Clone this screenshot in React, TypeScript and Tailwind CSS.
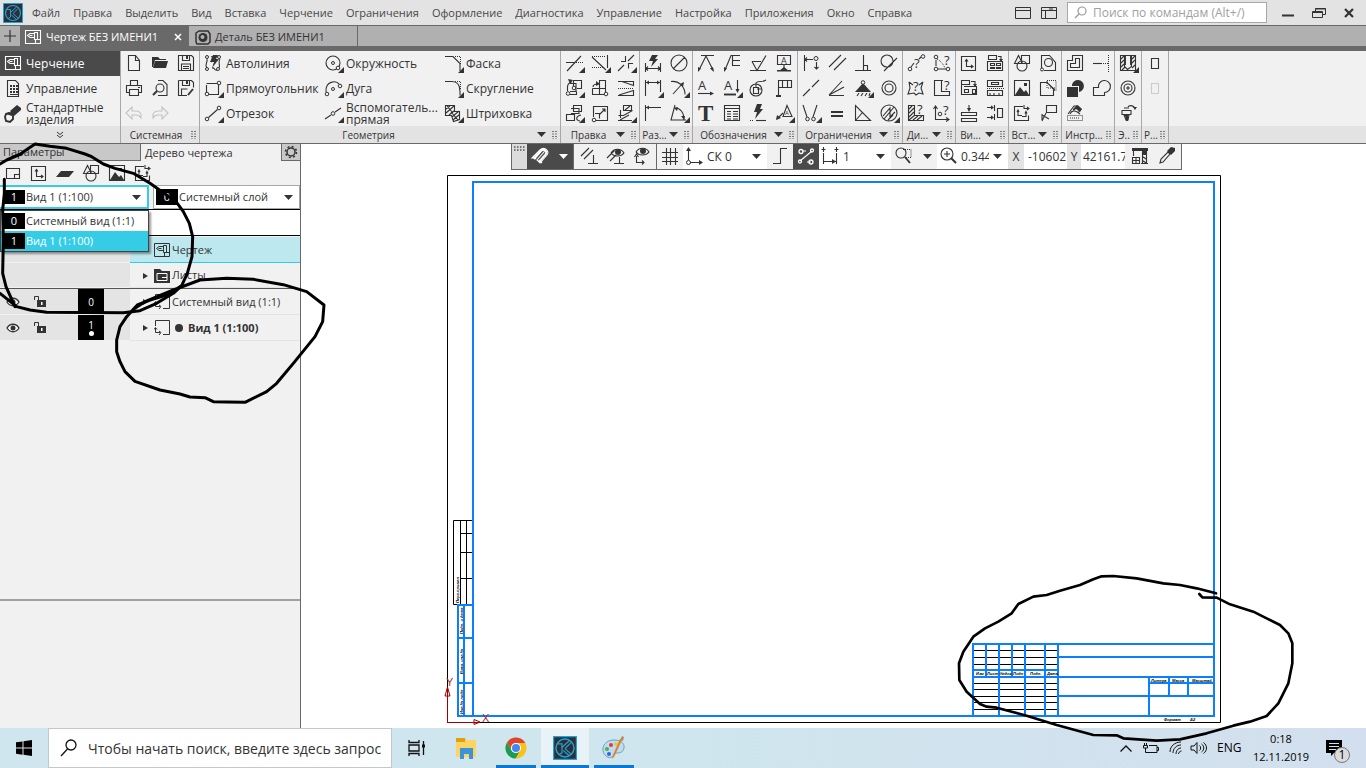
import { useState } from 'react';
import type { ReactNode } from 'react';

interface Glyph {
  s?: string; // stroked path
  f?: string; // filled path
  d?: string; // dotted path
  b?: string; // bold stroke
  corner?: boolean;
  extra?: ReactNode;
}

const letter = (ch: string, x: number, y: number, size: number) => (
  <text x={x} y={y} fontSize={size} fontFamily="Open Sans, sans-serif" fill="currentColor">{ch}</text>
);

const DRAFT = 'M5.5 5.500h15v13h-15zM15.500 18v-3.500h5M14.500 7.500h3v7h-3zM14 8.500h-4l-2.500 2 2.500 2h4M9.500 10.500h3';
const AXES_BOX = 'M5.5 5.500h14v14h-14zM10.500 9v6.500h6M9 10.500l1.500-2 1.500 2M15 14l2 1.500-2 1.500';
const SHAPES = 'M9.500 4.500l4 8h-8zM12.500 4.500h8v8h-8zM8 15a5 5 0 1 0 10 0a5 5 0 1 0-10 0';
const PICTURE = 'M5.500 4.500h15v15h-15z';
const PICTURE_FILL = 'M6 19l5-8 4 5 2-2 3 5zM15 7h3v3h-3z';
const BREAK_BOX = 'M14 5.500H5.500v14h14v-5M9 10v4.500h4M8 11l1-2 1 2M15 4v3.500h4M18 6l2 1.500-2 1.500M13 15.500h4v-4M16 12.500l1-2 1 2';

const glyphs: Record<string, Glyph> = {
  draft: { s: DRAFT },
  report: { s: 'M7.500 4.500h8l3 3v13h-11z', f: 'M10 9h2v2h-2zM13 9h2v2h-2zM16 9h2v2h-2zM10 12h2v2h-2zM13 12h2v2h-2zM16 12h2v2h-2zM10 15h2v2h-2zM13 15h2v2h-2zM16 15h2v2h-2zM10 18h8v1h-8z' },
  bolt3d: { b: 'M6 13l3-1 4 2v4l-3 3-4-1-1-4z', f: 'M10 10l7-6 4 3v2l-7 6zM6 13l3-2 5 1-2 3z' },
  file: { s: 'M7.500 4.500h7l4 5v10h-11zM14.500 4.500v5h4' },
  open: { f: 'M5 6h6l2 2h6v1H8l-2 7H5zM8 10h13l-2 7H6z' },
  save: { s: 'M5.500 4.500h13l2 2v13h-15zM9.500 4.500v5h7v-5M8.500 19v-6h9v6M10 15.500h6M10 17.500h6', f: 'M13 5h2v3h-2z' },
  print: { s: 'M9.500 9.500v-5h7v5M8 16.500H5.500v-7h15v7H18M8.500 13.500h9v6h-9zM17 11.500h2' },
  preview: { s: 'M11 4.500h5l4 4v11h-9M9 12a4 4 0 1 1 8 0a4 4 0 1 1-8 0', b: 'M10 15l-4 4' },
  saveas: { s: 'M5.500 4.500h13l2 2v5M14 19.500H5.500v-15M9.500 4.500v5h7v-5M8.500 19v-6h6', b: 'M15 19l5-6', f: 'M13 5h2v3h-2z' },
  undo: { s: 'M5 12l6-6v4h4c4 0 6 3 5 7-1-2-3-3-5-3h-4v4z' },
  redo: { s: 'M21 12l-6-6v4h-4c-4 0-6 3-5 7 1-2 3-3 5-3h4v4z' },

  autoline: { s: 'M7 17c-3-4 1-5 0-9M11 6c3-2 2 3 0 5M12 17c3-1 2 3 5 2M20 8c-3 4 1 5-1 9', f: 'M13 4h5l-2 4h3l-7 9 2-6h-4z', extra: <g fill="none" stroke="currentColor"><circle cx="7" cy="6" r="1.500" /><circle cx="7" cy="18" r="1.500" /><circle cx="19" cy="6" r="1.500" /><circle cx="18" cy="18" r="1.500" /></g> },
  rect: { s: 'M6.500 9v8M9 18.500h9.500V8M17 7.500H6.500', corner: true, extra: <g fill="none" stroke="currentColor"><circle cx="7" cy="18" r="1.800" /><circle cx="19" cy="7" r="1.800" /></g> },
  segment: { s: 'M8.500 16.500l9-8', corner: true, extra: <g fill="none" stroke="currentColor"><circle cx="7" cy="18" r="1.800" /><circle cx="19" cy="7" r="1.800" /></g> },
  circle: { s: 'M6 12a7 7 0 1 1 14 0a7 7 0 1 1-14 0', corner: true, extra: <g fill="none" stroke="currentColor"><circle cx="13" cy="12" r="1.500" /><circle cx="18" cy="17" r="1.800" fill="#f1f1f1" /></g> },
  arc: { s: 'M6 16c-1-11 10-12 13-8', corner: true, extra: <g fill="none" stroke="currentColor"><circle cx="13" cy="13" r="1.500" /><circle cx="7" cy="18" r="1.800" /><circle cx="20" cy="10" r="1.800" /></g> },
  auxline: { s: 'M5 18l6-4M15 11l6-4', corner: true, extra: <circle cx="13" cy="12.500" r="1.800" fill="none" stroke="currentColor" /> },
  chamfer: { s: 'M5 5.500h8l7 7V20', d: 'M15 5.500h6M20.500 6v7', corner: true },
  fillet: { s: 'M5 5.500h7c6 0 8 4 8 10v4', d: 'M15 5.500h6M20.500 6v7', corner: true },
  hatch: { s: 'M5.500 4.500h9v6h5v8l-6 2-2-6h-6zM6 8l4-3M6 12l8-7M9 14l6-5M12 16l7-6M13 19l7-6M7 5l6 7M11 11l7 8', corner: true },

  trim: { s: 'M5 11.500h9M6 20L20 5', d: 'M15 11.500h7', corner: true },
  extend: { s: 'M20.500 4v13M5 6l14 13', d: 'M5 5.500h14M5 16.500h11', corner: true },
  split: { s: 'M5 20l6-6M15 10l6-6M8 10.500h4.500V5M20 12.500h-4.500v5', corner: true },
  move: { s: 'M9 7.500h6v8H9M12.500 10V4.500h8v8H16M9 18.500h6.500v-3M6.500 15v-4c0-3 1-4 4-5', f: 'M7 3l5 1-3 4z', corner: true, extra: <g fill="none" stroke="currentColor"><circle cx="7" cy="17.500" r="1.800" /><circle cx="13" cy="12" r="1.800" /></g> },
  copy: { s: 'M5.500 12.500h13M12.500 18V4.500h6V16M5.500 12.500v6H17M6 11c0-3 3-3 5-3', f: 'M9 5l4 3-4 2z', extra: <circle cx="19" cy="18" r="1.800" fill="none" stroke="currentColor" /> },
  mirror: { s: 'M5 5.500h15.500v4L9 5.500M5 19.500h15.500v-5L6 19', d: 'M5 12.500h16' },
  scatter: { s: 'M12.500 4.500h8v6h-8zM10 7.500h8v5h-8M5.500 13.500h8v6h-8zM19 20c-5-1-4-5 1-6', corner: true },
  scale: { s: 'M9 19.500h11.500v-14h-14V16M8 12.500h4.500v5M12 14l6-6M15 8h3v3', extra: <circle cx="7" cy="19" r="1.800" fill="none" stroke="currentColor" /> },
  deform: { s: 'M10.500 4.500h8v5h-8zM17 5l-5 4M7.500 9v8M5.500 14.500h5l9-5M7 19l9-5M5 19.500h14', corner: true },

  autodim: { s: 'M5.500 12v9M20.500 12v9M6 17.500h14M8 15.500l-2 2 2 2M18 15.500l2 2-2 2', f: 'M12 4h6l-3 4h3l-7 8 2-6h-4z' },
  diameter: { s: 'M5 12a8 8 0 1 1 16 0a8 8 0 1 1-16 0M7 18L19 6' },
  lindim: { s: 'M5.500 4v16M20.500 4v12M6 6.500h14', f: 'M6 6.500l3-2v4zM20 6.500l-3-2v4z', corner: true },
  raddim: { s: 'M5 5.500c8-1 14 5 14 13M7 18L17 7', f: 'M18 6l-1 5-3-3z', corner: true },
  basedim: { s: 'M5.500 4v16M6 6.500h15', f: 'M6 6.500l3-2v4z' },
  angdim: { s: 'M9 4l-4 15h15M9 7c5 0 9 4 9 12', f: 'M8 7l4-1-1 4zM18 19l-3-4h4z', corner: true },

  leader: { s: 'M6 19l7-14 7 14M8 4.500h13', f: 'M5 21l0-5 3 1.500zM21 21l-4-3.500 3-1.500z' },
  posline: { s: 'M6 19l6-14.500h9M13.500 5v10M14 9.500h7M14 14.500h7', f: 'M5 21l0-5 3 1.500z' },
  rough: { s: 'M5 19.500h16M7 10.500h9M7 10.500l5 9 9-15' },
  base: { s: 'M6.500 4.500h13v9h-13zM13 14v4', f: 'M8 20l5-4 5 4zM6 19h14v1.500H6z', extra: letter('A', 10, 12.500, 9) },
  textarrow: { s: 'M5 17.500h14', f: 'M21 17.500l-4-2v4z', extra: letter('A', 5, 14, 13) },
  textdown: { s: 'M18.500 4v11', b: 'M5 18.500h12', f: 'M18.500 17l-2-4h4z', corner: true, extra: letter('A', 5, 14, 13) },
  nodesign: { s: 'M5 14a6 6 0 1 1 12 0a6 6 0 1 1-12 0M8.500 11.500h5v6h-5zM11 11V7c2-3 6 0 10-3M17 13h-5' },
  flag: { s: 'M7.500 4.500h13v7h-13zM11.500 5v7M16.500 5v7M7.500 4v15', f: 'M5 19h5v2H5z' },
  textT: { extra: <text x="5" y="20" fontSize="23" fontFamily="Liberation Serif, serif" fontWeight="bold" fill="currentColor">T</text> },
  table: { s: 'M5.500 4.500h15v15h-15zM6 7.500h14M8 10.500h4M14 10.500h5M8 13h4M14 13h5M8 15.500h4M14 15.500h5M8 18h4M14 18h5' },
  boltline: { f: 'M12 3h5l-2 5h3l-8 10 2-7H9z', d: 'M5 19.500h4', s: 'M11 19.500h10' },
  warn: { s: 'M6 18l6-6M16 4.500l5 11h-9z', f: 'M5 19l1-5 4 3z', corner: true, extra: letter('A', 14, 14, 6) },

  align: { s: 'M6.500 4v16M8 8.500h7M18.500 11v7M9 6.500l-2 2 2 2M16.500 16l2 2 2-2', extra: <circle cx="18" cy="7.500" r="2" fill="none" stroke="currentColor" /> },
  parallel: { s: 'M5 16L17 4M10 19L22 7' },
  perp: { s: 'M5 19.500h16M13.500 4v16M13.500 14.500h4v5' },
  tangent: { s: 'M5 10a6 6 0 1 1 12 0a6 6 0 1 1-12 0M8 20L21 7' },
  collinear: { s: 'M5 20l7-7M14 11l7-7' },
  angles: { s: 'M5 19L18 5M5 19l15-8M5 19.500h15' },
  fix: { s: 'M7 20l2-3M11 20l2-3M15 20l2-3M19 20l1-3', f: 'M13 7l8 9H5z', corner: true, extra: <circle cx="13" cy="6.500" r="1.800" fill="#f1f1f1" stroke="currentColor" /> },
  concentric: { s: 'M6 12a7 7 0 1 1 14 0a7 7 0 1 1-14 0M9 12a4 4 0 1 1 8 0a4 4 0 1 1-8 0' },
  symm: { s: 'M5 4l4 12M19 4l-4 12', corner: true, extra: <g fill="none" stroke="currentColor"><circle cx="9.500" cy="18" r="1.800" /><circle cx="15.500" cy="18" r="1.800" /></g> },
  equal: { b: 'M7 11h12M7 15h12' },
  triang: { s: 'M5.500 4.500v15h15zM5.500 19.500l7-8' },
  circhatch: { s: 'M5 12a8 8 0 1 1 16 0a8 8 0 1 1-16 0M7 15l7-8v4l4-5M8 18l6-7v5l5-5M12 19l5-5', corner: true },

  dist: { s: 'M8 16l3-4M16 8l2-2', extra: <g><g fill="none" stroke="currentColor"><circle cx="7" cy="18" r="1.800" /><circle cx="20" cy="5.500" r="1.800" /></g>{letter('?', 11, 17, 13)}</g> },
  angq: { s: 'M7 9v6M9 18h8', d: 'M8 8c4 2 6 5 8 9', extra: <g><g fill="none" stroke="currentColor"><circle cx="7" cy="6" r="1.800" /><circle cx="7" cy="18" r="1.800" /><circle cx="19" cy="18" r="1.800" /></g>{letter('?', 15, 14, 13)}</g> },
  starq: { s: 'M6 6l4 3M20 6l-4 3M6 6l1 6-2 6 6-1 2 2 3-2 4 1-2-6 2-6', extra: letter('?', 10, 15, 13) },
  lq: { s: 'M14 4.500H5.500v15h15v-4h-8v-11', extra: letter('?', 15, 14, 13) },
  hatchq: { s: 'M5.500 4.500h6v10h9v5h-15zM6 8l3-3M6 12l5-5M6 16l5-5M6 19l6-5M10 19l5-4M14 19l5-4', extra: letter('?', 14, 13, 13) },
  axq: { s: 'M6.500 5v13.500H20M4.500 8l2-3 2 3M17 16.500l3 2-3 2', extra: <g><circle cx="11" cy="13" r="1.800" fill="none" stroke="currentColor" />{letter('?', 14, 14, 13)}</g> },

  view: { s: AXES_BOX },
  views: { s: 'M6.500 4.500h8v4h-8zM16 5.500h3v4M5.500 10.500h15v9h-15zM8.500 12.500h4v2h-4zM14.500 12.500h4v2h-4zM8.500 16.500h4v1h-4zM14.500 16.500h4v1h-4z', f: 'M17 8h4l-2 3z' },
  viewmove: { s: 'M5.500 4.500h8v4h-8zM15 5.500h4v3M5.500 9v9.500h15v-8H8M8.500 13.500h4v3h-4zM16.500 13.500h3v4h-3z', f: 'M17 8h4l-2 3z' },
  viewsplit: { s: 'M5.500 4.500h15v6h-15zM9.500 6.500h7v2h-7zM5.500 14.500h15v5h-15zM8 17v2M12 17v2M17 17v2', d: 'M5 12.500h17' },
  viewalign: { s: 'M5.500 11.500h15v3h-15zM5.500 17.500h15v3h-15zM13 4v5', f: 'M13 11l-2-4h4z' },
  viewbreak: { s: 'M15.500 7.500h5v9h-5zM12.500 4v6M12.500 13v6M5 6.500h6M5 16.500h6M9 5l2 1.500-2 1.500M9 15l2 1.500-2 1.500' },
  shapes: { s: SHAPES },
  fragment: { s: 'M6.500 17V4.500h8l6 7v8H9M9.500 11.500a4 4 0 1 1 8 0a4 4 0 1 1-8 0', extra: <circle cx="7" cy="18.500" r="1.500" fill="none" stroke="currentColor" /> },
  picture: { s: PICTURE, f: PICTURE_FILL },
  detail: { s: 'M12 6.500H5.500v13h13v-7zM12 6.500l8 8', d: 'M12 4.500h9v10M12 5v7h8' },
  breakbox: { s: BREAK_BOX },
  label: { s: 'M11.500 4.500h10v7h-10zM11 12l-4 8M7 13v6M7 14l7 4' },
  contour: { s: 'M5.500 19.500v-10h5v-5h10v15zM8.500 16.500v-4h5v-5h4v9z' },
  project: { s: 'M5 12.500h9', d: 'M15 12.500h5M20.500 4v17' },
  boolean: { f: 'M5 11h11v10H5zM10 9a6 6 0 1 1 7 7v-6h-7z' },
  union: { s: 'M5.500 11.500h5a6 6 0 1 1 6 5v3h-11z' },
  measure: { s: 'M6 13l6-8h4l3 3-3 4M8 13c2-5 7-3 10 0', f: 'M11 8l4-4 5 4-2 3-4-3-3 2z', d: 'M5.500 14.500h15v5h-15zM8 17h10' },
  hole: { s: 'M5.500 4.500h15v15h-15zM9.500 4.500v11l3 3 4-3v-11M6 8l3-3M6 12l3-3M6 16l3-3M17 8l3-3M17 12l3-3M7 19l3-3M17 17l3-3', b: 'M10 4v10M16 4v10', corner: true },
  cplus: { s: 'M6 12a7 7 0 1 1 14 0a7 7 0 1 1-14 0M9 12a4 4 0 1 1 8 0a4 4 0 1 1-8 0M13 10v4M11 12h4' },
  screw: { s: 'M7 9.500h9v4H7zM9 14h5l-1 5h-2zM13 6c1-2 5-2 7 1M9 7h5', f: 'M18 6h4l-2 3zM10 14h3v6h-2z' },
  box: { s: 'M9.500 7.500h7v10h-7z' },
  sheet: { s: 'M6.500 7.500h13v10h-13zM14.500 17v-3.500h5' },
  layer: { f: 'M9 10h13l-5 6H4z' },
  snapPar: { s: 'M3 12l8-8M6 15l9-9M10 19.500h10M15.500 11v8' },
  snapEye: { s: 'M3 14l8-8M6 17l6-6M10 19.500h10M15.500 13v6M7 9c3-5 10-5 13 0-3 4-10 4-13 0', f: 'M11 8a3 3 0 1 1 6 0a3 3 0 1 1-6 0' },
  axEye: { s: 'M6.500 12v6.500h7M4.500 13l2-3 2 3M12 16.500l2 2-2 2M6 8c3-5 10-5 13 0-3 4-10 4-13 0', f: 'M10 7a3 3 0 1 1 6 0a3 3 0 1 1-6 0' },
  grid: { s: 'M5 8.500h16M5 13.500h16M5 17.500h16M9.500 4v17M13.500 4v17M18.500 4v17' },
  cs: { s: 'M7.500 16V6M9 18.500h11', f: 'M7.500 3l-2.500 4h5zM22 18.500l-4-2.500v5z', extra: <circle cx="7.500" cy="18.500" r="2" fill="none" stroke="currentColor" /> },
  ortho: { s: 'M6 19.500h7.500v-15H20' },
  constr: { s: 'M7 17L19 7M9 7h4M14 18h4', extra: <g fill="none" stroke="currentColor" strokeWidth="1.300"><circle cx="8" cy="7.500" r="2" /><circle cx="19" cy="6.500" r="1.500" /><circle cx="7" cy="17.500" r="1.500" /><circle cx="18" cy="18" r="2" /></g> },
  step: { s: 'M6.500 9v11M19.500 9v11M7 17.500h12M4.500 5.500h4M17.500 5.500h4M6.500 3v5M19.500 3v5', f: 'M19 17.500l-4-2.500v5z' },
  zoomWin: { s: 'M5 9a5 5 0 1 1 10 0a5 5 0 1 1-10 0', b: 'M14 13l5 6', d: 'M12 5.500h8v8h-5' },
  zoomIn: { s: 'M6 10a6 6 0 1 1 12 0a6 6 0 1 1-12 0M9 10h6M12 7v6', b: 'M16 14l5 5' },
  crane: { s: 'M5 6.500h15M6.500 7v5M5.500 13.500h7v6h-7zM5 16.500h8M9 14v5M15.500 7v12M19.500 7v12M15 12l4 3M15 16l4 3M14 19.500h7', f: 'M5 4h16v3H5zM15 7h5v4h-5z' },
  pipette: { s: 'M6 19l1-4 7-7 2 2-7 8z', f: 'M13 7l4-4 4 1 0 3-4 4z' },
  magnet: { s: 'M5 14l8-8c4-4 10 1 7 5l-7 8-3-3 7-8c1-2-1-3-2-2l-8 8zM6 12l3 3M12 16l3 3', b: 'M7 15l7-8c3-3 6 0 5 3l-7 8' },
};

function Icon({ name, className = '' }: { name: string; className?: string }) {
  const g = glyphs[name];
  return (
    <svg width="26" height="25" viewBox="0 0 26 25" className={`shrink-0 ${className}`} aria-hidden="true">
      {g.s && <path d={g.s} fill="none" stroke="currentColor" strokeWidth="1.100" />}
      {g.b && <path d={g.b} fill="none" stroke="currentColor" strokeWidth="1.900" />}
      {g.d && <path d={g.d} fill="none" stroke="currentColor" strokeDasharray="1 1" />}
      {g.f && <path d={g.f} fill="currentColor" />}
      {g.extra}
      {g.corner && <path d="M24 16v6h-6z" fill="currentColor" />}
    </svg>
  );
}

const Caret = ({ className = '' }: { className?: string }) => (
  <svg width="9" height="5" viewBox="0 0 9 5" className={`shrink-0 ${className}`} aria-hidden="true"><path d="M0 0h9L4.500 5z" fill="currentColor" /></svg>
);

const Grip = () => (
  <svg width="6" height="10" viewBox="0 0 6 10" className="shrink-0" aria-hidden="true">
    <path d="M1 1v8M4 1v8" stroke="#555" strokeWidth="1.500" strokeDasharray="1 1.500" />
  </svg>
);

const Kompas = ({ size }: { size: number }) => (
  <svg width={size} height={size} viewBox="0 0 20 20" className="shrink-0" aria-hidden="true">
    <path d="M.5.500h19v19H.5z" fill="#2f2f33" stroke="#1fa3dc" />
    <g fill="none" stroke="#1fa3dc">
      <circle cx="10" cy="10" r="7.500" strokeWidth="1.200" />
      <path d="M3.500 6.500h4v3L13.500 4M7.500 9.500V14L5 15.500M10 10.500l5-5M10 10.500l5.500 5M8.500 12l5 4.500" />
    </g>
  </svg>
);

const menus = ['Файл', 'Правка', 'Выделить', 'Вид', 'Вставка', 'Черчение', 'Ограничения', 'Оформление', 'Диагностика', 'Управление', 'Настройка', 'Приложения', 'Окно', 'Справка'];

const geometry = [
  ['autoline', 'Автолиния'], ['circle', 'Окружность'], ['chamfer', 'Фаска'],
  ['rect', 'Прямоугольник'], ['arc', 'Дуга'], ['fillet', 'Скругление'],
  ['segment', 'Отрезок'], ['auxline', 'Вспомогатель... прямая'], ['hatch', 'Штриховка'],
];

const groups = [
  { label: 'Правка', cols: 'grid-cols-[repeat(3,26px)]', arrow: true, icons: ['trim', 'extend', 'split', 'move', 'copy', 'mirror', 'scatter', 'scale', 'deform'] },
  { label: 'Раз...', cols: 'grid-cols-[repeat(2,26px)]', arrow: true, icons: ['autodim', 'diameter', 'lindim', 'raddim', 'basedim', 'angdim'] },
  { label: 'Обозначения', cols: 'grid-cols-[repeat(4,26px)]', arrow: true, icons: ['leader', 'posline', 'rough', 'base', 'textarrow', 'textdown', 'nodesign', 'flag', 'textT', 'table', 'boltline', 'warn'] },
  { label: 'Ограничения', cols: 'grid-cols-[repeat(4,26px)]', arrow: true, icons: ['align', 'parallel', 'perp', 'tangent', 'collinear', 'angles', 'fix', 'concentric', 'symm', 'equal', 'triang', 'circhatch'] },
  { label: 'Ди...', cols: 'grid-cols-[repeat(2,26px)]', arrow: true, icons: ['dist', 'angq', 'starq', 'lq', 'hatchq', 'axq'] },
  { label: 'Ви...', cols: 'grid-cols-[repeat(2,26px)]', arrow: true, icons: ['view', 'views', 'viewmove', 'viewsplit', 'viewalign', 'viewbreak'] },
  { label: 'Вст...', cols: 'grid-cols-[repeat(2,26px)]', arrow: true, icons: ['shapes', 'fragment', 'picture', 'detail', 'breakbox', 'label'] },
  { label: 'Инстр...', cols: 'grid-cols-[repeat(2,26px)]', arrow: false, icons: ['contour', 'project', 'boolean', 'union', 'measure'] },
  { label: 'Э..', cols: 'grid-cols-[26px]', arrow: false, icons: ['hole', 'cplus', 'screw'] },
  { label: 'Р...', cols: 'grid-cols-[26px]', arrow: false, icons: ['box', 'box'] },
];

function Group({ label, arrow, children }: { label: string; arrow: boolean; children: ReactNode }) {
  return (
    <section className="flex shrink-0 flex-col border-r border-[#a8a8a8]">
      <div className="h-[75px]">{children}</div>
      <footer className="flex h-[17px] items-center bg-[#e3e3e3] pr-0.5 text-[10px] text-[#333]">
        <span className="w-0 flex-1 pt-0.5 text-center whitespace-nowrap">{label}</span>
        {arrow && <Caret className="mr-1.5" />}
        <Grip />
      </footer>
    </section>
  );
}

function Ribbon() {
  return (
    <div className="flex h-[93px] shrink-0 overflow-hidden border-b border-[#696969] bg-[#f1f1f1] text-[#333]">
      <nav className="flex w-[121px] shrink-0 flex-col border-r border-[#a8a8a8]">
        <button className="flex h-[25px] items-center bg-[#4a4a4a] text-white"><Icon name="draft" />Черчение</button>
        <button className="flex h-[25px] items-center"><Icon name="report" />Управление</button>
        <button className="flex h-[25px] items-center text-left leading-3"><Icon name="bolt3d" /><span>Стандартные изделия</span></button>
        <button className="flex h-[17px] items-center justify-center bg-[#e3e3e3]" aria-label="Ещё">
          <svg width="8" height="8" viewBox="0 0 8 8"><path d="M1 1l3 2.500L7 1M1 4l3 2.500L7 4" fill="none" stroke="currentColor" /></svg>
        </button>
      </nav>
      <Group label="Системная" arrow={false}>
        <div className="grid grid-cols-[repeat(3,26px)]">
          {['file', 'open', 'save', 'print', 'preview', 'saveas', 'undo', 'redo'].map((n) => (
            <button key={n} aria-label={n}><Icon name={n} className={n === 'undo' || n === 'redo' ? 'text-[#c4c4c4]' : ''} /></button>
          ))}
        </div>
      </Group>
      <Group label="Геометрия" arrow>
        <div className="grid grid-cols-[repeat(3,120px)]">
          {geometry.map(([n, t]) => (
            <button key={n} className="flex h-[25px] items-center text-left leading-3"><Icon name={n} />{t}</button>
          ))}
        </div>
      </Group>
      {groups.map((g) => (
        <Group key={g.label} label={g.label} arrow={g.arrow}>
          <div className={`grid ${g.cols}`}>
            {g.icons.map((n, i) => (
              <button key={i} aria-label={n}><Icon name={n} className={n === 'box' && i ? 'text-[#ccc]' : ''} /></button>
            ))}
          </div>
        </Group>
      ))}
      <div className="flex flex-1 flex-col justify-end"><div className="h-[17px] bg-[#e3e3e3]" /></div>
    </div>
  );
}

const Eye = () => (
  <svg width="14" height="10" viewBox="0 0 14 10"><path d="M1 5c3-5 9-5 12 0-3 5-9 5-12 0z" fill="#fff" stroke="#333" strokeWidth="1.300" /><circle cx="7" cy="5" r="2.500" fill="#333" /></svg>
);

const Lock = () => (
  <svg width="14" height="13" viewBox="0 0 14 13"><path d="M1.500 5V1.500h4V6" fill="none" stroke="#333" /><path d="M4 5h9v7H4z" fill="#333" /><path d="M8 7h1.500v3H8z" fill="#fff" /></svg>
);

const Num = ({ children }: { children: ReactNode }) => (
  <span className="flex w-[22px] shrink-0 items-center justify-center self-stretch bg-black text-white">{children}</span>
);

interface Row { label: string; icon?: string; num?: string; expand?: boolean; active?: boolean; bold?: boolean }

const rows: Row[] = [
  { label: 'Чертеж', icon: 'draft', active: true },
  { label: 'Листы', icon: 'folder', expand: true },
  { label: 'Системный вид (1:1)', icon: 'viewrow', num: '0', expand: true },
  { label: 'Вид 1 (1:100)', icon: 'viewrow', num: '1', expand: true, bold: true },
];

function RowIcon({ icon }: { icon?: string }) {
  if (icon === 'folder') {
    return <svg width="17" height="14" viewBox="0 0 17 14"><path d="M0 0h6l2 2h8v12H0z" fill="#333" /><path d="M3 4.500h10v7H3zM8 8.500h5" fill="none" stroke="#fff" /></svg>;
  }
  if (icon === 'viewrow') {
    return <svg width="17" height="18" viewBox="0 0 17 18"><path d="M1.500 7V1.500h14v14H9M1.500 9v4.500H6M0 10.500l1.500-2 1.500 2M5 12l2 1.500L5 16" fill="none" stroke="#333" /></svg>;
  }
  return <svg width="17" height="15" viewBox="5 5 17 15"><path d={DRAFT} fill="none" stroke="#333" /></svg>;
}

function SidePanel() {
  const [view, setView] = useState('1');
  const options = [['0', 'Системный вид (1:1)'], ['1', 'Вид 1 (1:100)']];
  return (
    <aside className="flex w-[301px] shrink-0 flex-col border-r border-[#696969] bg-[#f1f1f1] text-[11px] text-[#333]">
      <div className="flex h-[17px] shrink-0 leading-4">
        <button className="w-[141px] border-r border-b border-[#696969] bg-[#c8c8c8] pl-[3px] text-left">Параметры</button>
        <button className="flex-1 pl-1 text-left">Дерево чертежа</button>
        <button className="flex w-[19px] items-center justify-center border-b border-l border-[#696969] bg-[#c8c8c8]" aria-label="Настройка">
          <svg width="14" height="14" viewBox="0 0 14 14"><circle cx="7" cy="7" r="4" fill="none" stroke="#333" strokeWidth="1.500" /><circle cx="7" cy="7" r="5.500" fill="none" stroke="#333" strokeWidth="1.500" strokeDasharray="2 2.320" /></svg>
        </button>
      </div>
      <div className="flex h-6 shrink-0 items-center">
        {['sheet', 'view', 'layer', 'shapes', 'picture', 'breakbox'].map((n) => <button key={n} aria-label={n}><Icon name={n} /></button>)}
      </div>
      <div className="relative flex h-6 shrink-0 gap-1">
        <label className="flex w-[149px] items-center border-2 border-l-0 border-[#35cde6] bg-white py-[3px] pl-[3px]">
          <Num>{view}</Num>
          <select value={view} onChange={(e) => setView(e.target.value)} className="w-0 flex-1 appearance-none bg-transparent pl-[1px] outline-none" aria-label="Вид">
            {options.map(([v, t]) => <option key={v} value={v}>{t}</option>)}
          </select>
          <Caret className="mr-1.5" />
        </label>
        <label className="flex flex-1 items-center border border-[#a8a8a8] bg-white py-[3px] pl-[2px]">
          <Num>0</Num>
          <select className="w-0 flex-1 appearance-none bg-transparent pl-[1px] outline-none" aria-label="Слой"><option>Системный слой</option></select>
          <Caret className="mr-1.5" />
        </label>
        <ul className="absolute top-[25px] left-0 z-10 w-[149px] border border-[#444] bg-white shadow-[2px_2px_2px_#0006]">
          {options.map(([v, t]) => (
            <li key={v}>
              <button onClick={() => setView(v)} className={`flex h-5 w-full items-center gap-[1px] py-[2px] pl-[2px] text-left ${v === view ? 'bg-[#35cde6] text-white' : ''}`}>
                <Num>{v}</Num>{t}
              </button>
            </li>
          ))}
        </ul>
      </div>
      <input className="h-[27px] shrink-0 border-y border-black bg-white px-2 outline-none" aria-label="Поиск в дереве" />
      <div className="flex flex-col pt-px">
        {rows.map((r, i) => (
          <div key={r.label} className={`flex h-[26px] ${i === 1 ? 'border-b border-[#555]' : ''}`}>
            <div className="flex w-[130px] items-center border-b border-[#f1f1f1] bg-[#e4e4e4]">
              {r.num && (
                <>
                  <button className="flex w-[26px] justify-center" aria-label="Видимость"><Eye /></button>
                  <button className="flex w-[52px] pl-[7px]" aria-label="Блокировка"><Lock /></button>
                  <span className="flex w-[26px] flex-col items-center justify-center self-stretch bg-black text-[10px] leading-3 text-white">
                    {r.num}
                    {r.bold && <i className="h-[5px] w-[5px] rounded-full bg-white" />}
                  </span>
                </>
              )}
            </div>
            <button className={`flex flex-1 items-center border-b pt-px text-left ${r.active ? 'border-[#35cde6] bg-[#bde8ef]' : 'border-[#e4e4e4]'} ${r.bold ? 'font-bold' : ''}`}>
              <span className="flex w-6 justify-end pr-1.5">
                {r.expand && <svg width="5" height="6" viewBox="0 0 5 6"><path d="M0 0l5 3-5 3z" fill="#333" /></svg>}
              </span>
              <RowIcon icon={r.icon} />
              {r.bold && <i className="mr-1 ml-1 h-2 w-2 rounded-full bg-[#333]" />}
              <span className="pl-px">{r.label}</span>
            </button>
          </div>
        ))}
      </div>
      <div className="flex-1 border-b-2 border-[#a0a0a0]" />
      <div className="h-[127px] shrink-0" />
    </aside>
  );
}

function ViewToolbar() {
  return (
    <div className="z-10 ml-[210px] flex h-[26px] w-fit shrink-0 border-x border-b border-[#696969] bg-[#f1f1f1] text-[#333]">
      <div className="w-[15px] bg-[#dcdcdc] pt-0.5 pl-0.5">
        <svg width="12" height="5" viewBox="0 0 12 5"><path d="M0 1h12M0 4h12" stroke="#555" strokeWidth="1.500" strokeDasharray="1.500 1.500" /></svg>
      </div>
      <button className="flex w-[46px] items-center bg-[#4a4a4a] text-white" aria-label="Привязки"><Icon name="magnet" /><Caret className="ml-1.5" /></button>
      <div className="flex border-x border-x-[#696969] pl-1">
        <button aria-label="Параллельность"><Icon name="snapPar" /></button>
        <button aria-label="Показать привязки"><Icon name="snapEye" /></button>
        <button aria-label="Показать оси"><Icon name="axEye" /></button>
      </div>
      <button aria-label="Сетка"><Icon name="grid" /></button>
      <label className="flex w-[84px] items-center bg-white">
        <Icon name="cs" className="-ml-0.5" />
        <select className="w-0 flex-1 appearance-none bg-transparent outline-none" aria-label="Система координат"><option>СК 0</option></select>
        <Caret className="mr-1.5" />
      </label>
      <button aria-label="Ортогональное черчение"><Icon name="ortho" /></button>
      <button className="bg-[#4a4a4a] text-white" aria-label="Параметрический режим"><Icon name="constr" /></button>
      <label className="flex w-[72px] items-center bg-white">
        <Icon name="step" className="-ml-0.5" />
        <select className="w-0 flex-1 appearance-none bg-transparent outline-none" aria-label="Шаг курсора"><option>1</option></select>
        <Caret className="mr-1.5" />
      </label>
      <button className="flex w-[46px] items-center" aria-label="Масштаб рамкой"><Icon name="zoomWin" /><Caret className="ml-1.5" /></button>
      <label className="flex w-[71px] items-center bg-white">
        <Icon name="zoomIn" className="-ml-0.5" />
        <input defaultValue="0.344" className="w-[28px] outline-none" aria-label="Масштаб" />
        <Caret className="ml-1" />
      </label>
      <label className="flex items-center bg-[#e3e3e3]">
        <span className="w-4 text-center">X</span>
        <input defaultValue="-10602" className="h-full w-[43px] bg-white pl-1 outline-none" />
      </label>
      <label className="flex items-center bg-[#e3e3e3]">
        <span className="w-[14px] text-center">Y</span>
        <input defaultValue="42161.7" className="h-full w-[44px] bg-white pl-0.5 outline-none" />
      </label>
      <button className="ml-0.5" aria-label="Оснастка"><Icon name="crane" /></button>
      <button className="px-px" aria-label="Копировать свойства"><Icon name="pipette" /></button>
    </div>
  );
}

// Sheet with frame and title block
const Sheet = () => (
  <svg className="w-full flex-1" viewBox="301 170 1065 558" preserveAspectRatio="xMidYMin meet" role="img" aria-label="Лист чертежа">
    <path d="M447.500 175.500h773v547h-773z" fill="none" stroke="#000" />
    <path d="M473 520.500h-19.500v84h5M460.500 520.500v84M466.500 520.500v84M460 533.500h13M460 552.500h13M460 578.500h13" fill="none" stroke="#000" />
    <path d="M973 650.500h85M973 657.500h85M973 664.500h85M973 683.500h85M973 689.500h85M973 696.500h85M973 702.500h85M973 709.500h85" stroke="#000" />
    <g fill="none" stroke="#0a80ff" strokeWidth="2">
      <path d="M473 182h741v534H473z" />
      <path d="M473 605h-15v111h15M464 605v111M458 638h15M458 683h15" />
      <path d="M973 716v-72h241M986 644v33M999 644v72M1012 644v33M1025 644v72M1045 644v72M1058 644v72M973 670h85M973 677h241M1058 657h156M1058 696h156M1149 677v39M1149 683h65M1169 677v19M1188 677v19" />
    </g>
    <g fontSize="4" fontStyle="italic" fontFamily="Liberation Sans, sans-serif" fontWeight="bold">
      <text x="976" y="675">Изм</text><text x="987" y="675">Лист</text><text x="1000" y="675">№док</text><text x="1013" y="675">Подп</text><text x="1030" y="675">Подп.</text><text x="1047" y="675">Дата</text>
      <text x="1151" y="682">Литера</text><text x="1172" y="682">Масса</text><text x="1192" y="682">Масштаб</text>
      <text x="1164" y="721">Формат</text><text x="1190" y="721">A2</text>
      <text transform="translate(459 603) rotate(-90)">Перв.примен</text>
      <text transform="translate(463 634) rotate(-90)">Подп. и дата</text>
      <text transform="translate(463 674) rotate(-90)">Взам. инв.№</text>
      <text transform="translate(463 714) rotate(-90)">Инв.№ подл</text>
    </g>
    <path d="M447.500 722V687M447 722.500h33M447.500 687l-2.500 9h5zM480 722l-6-2.500v5z" fill="none" stroke="#a00000" />
    <g fill="#a03030" fontSize="11" fontFamily="Liberation Sans, sans-serif"><text x="446" y="686">Y</text><text x="482" y="722">X</text></g>
  </svg>
);

// Freehand marks over the window
const Marks = () => (
  <svg className="pointer-events-none absolute inset-0 z-20 h-full w-full" viewBox="0 0 1366 768" fill="none" stroke="#000" strokeLinejoin="round" strokeLinecap="round" aria-hidden="true">
    <g transform="translate(0 140) scale(.33333)" strokeWidth="9">
      <path d="M0 72L20 60 62 42 75 32 105 12 150 19 200 25 255 42 275 50 310 72 345 85 400 100 450 130 500 165 532 190 550 215 568 250 578 290 576 350 562 400 545 437 520 460 470 490 420 512 370 518 140 517 90 510 50 500 0 460" />
      <path d="M13 118L13 160 8 210 10 300 8 400 18 440 45 500" />
      <path d="M400 508L435 485 520 450 600 420 680 415 760 418 850 434 920 455 972 495 968 545 945 590 880 670 830 730 800 755 735 787 680 786 640 785 615 773 570 771 540 762 480 750 405 724 375 695 360 665 350 635 350 600 360 560 380 530 400 508 412 495 450 480 500 465 540 440" />
    </g>
    <g transform="translate(950 570) scale(.33333)" strokeWidth="8">
      <path d="M798 70L740 55 690 45 640 40 560 25 490 18 455 19 430 28 390 45 330 62 290 75 250 80 205 102 185 130 145 155 105 175 70 200 40 245 27 280 28 330 50 365 90 402 110 410 140 413 230 437 320 465 430 495 500 496 520 505 620 512 690 508 770 490 850 467 900 455 950 438 985 400 1015 340 1027 280 1027 220 1015 190 990 165 950 145 910 125 840 103 800 83 757 82 748 72" />
    </g>
  </svg>
);

function Taskbar() {
  return (
    <footer className="flex h-10 shrink-0 items-center bg-linear-to-r from-[#cfe6ee] via-[#cfe6ee] to-[#d3dfee] text-black">
      <button className="flex w-12 justify-center" aria-label="Пуск">
        <svg width="16" height="16" viewBox="0 0 16 16"><path d="M0 2.300l6.500-.9v6.200H0zM7.500 1.200L16 0v7.600H7.500zM0 8.500h6.500v6.200L0 13.800zM7.500 8.500H16V16l-8.500-1.200z" /></svg>
      </button>
      <label className="flex h-full w-[344px] items-center border border-[#c2c8cb] bg-white pl-[11px]">
        <svg width="17" height="20" viewBox="0 0 17 20" fill="none" stroke="#111" strokeWidth="1.300"><circle cx="11" cy="7" r="5" /><path d="M7.500 11L1 18" /></svg>
        <input placeholder="Чтобы начать поиск, введите здесь запрос" className="ml-[11px] w-0 flex-1 text-[14px] outline-none placeholder:text-[#333]" />
      </label>
      <button className="flex w-12 justify-center" aria-label="Представление задач">
        <svg width="17" height="16" viewBox="0 0 17 16" fill="none" stroke="#111" strokeWidth="1.300"><path d="M1 0v2.500h10V0M1 5h10v6H1zM1 16v-2.500h10V16M15.500 1v14" /><path d="M14 4.500h3v3h-3z" fill="#111" stroke="none" /></svg>
      </button>
      <button className="ml-px flex w-[50px] justify-center" aria-label="Проводник">
        <svg width="22" height="22" viewBox="0 0 22 22"><path d="M1 1h8l2 2h-10z" fill="#dd9b12" /><path d="M1 3h20v17H1z" fill="#fcd462" /><path d="M1 1h9v4H1z" fill="#e0a010" /><path d="M5 11h13v11h-4v-5H9v5H5z" fill="#3d93d8" /></svg>
      </button>
      <button className="ml-[5px] flex h-full w-10 items-center justify-center border-b-3 border-[#0a78d4] pt-[3px]" aria-label="Chrome">
        <svg width="22" height="22" viewBox="0 0 22 22"><circle cx="11" cy="11" r="10.500" fill="#fbc116" /><path d="M2 5.500A10.500 10.500 0 0 1 20.300 6H11a5 5 0 0 0-4.500 7z" fill="#dc4437" /><path d="M2 5.500a10.500 10.500 0 0 0 8.500 16l4.500-8a5 5 0 0 1-8.500 0z" fill="#1a9c57" /><circle cx="11" cy="11" r="5" fill="#fff" /><circle cx="11" cy="11" r="4" fill="#4285f4" /></svg>
      </button>
      <button className="ml-[5px] flex h-full w-12 items-center justify-center border-b-3 border-[#0a78d4] bg-[#e9f3f7] pt-[3px]" aria-label="КОМПАС"><Kompas size={24} /></button>
      <button className="ml-[5px] flex h-full w-10 items-center justify-center border-b-3 border-[#0a78d4] pt-[3px]" aria-label="Paint">
        <svg width="24" height="24" viewBox="0 0 24 24"><path d="M12 4C4 4 0 10 1 15s6 8 9 6 1-4 4-4 7 0 8-5-4-8-10-8z" fill="#bfdcf0" stroke="#6f9dbd" /><circle cx="5" cy="13" r="2" fill="#4caf50" /><circle cx="9" cy="9" r="2" fill="#e53935" /><circle cx="14" cy="8" r="1.800" fill="#f7c21b" /><circle cx="7" cy="18" r="2" fill="#3367d6" /><path d="M20 4l-8 17-2 2 1-4 7-16z" fill="#d98324" /><path d="M18 4l2-4 2 1-1 4z" fill="#b98d5a" /></svg>
      </button>
      <div className="ml-auto flex h-full items-center text-[12px]">
        <svg width="12" height="7" viewBox="0 0 12 7" fill="none" stroke="#111" strokeWidth="1.300"><path d="M.5 6.500L6 1l5.500 5.500" /></svg>
        <svg className="ml-[10px]" width="17" height="12" viewBox="0 0 17 12" fill="none" stroke="#111"><path d="M7 3.500h8v7H5M15 5.500h1.500v3H15M1.500 3.500h4V6h-4zM2.500 1v2M4.500 1v2M3.500 6v4.500H6" /></svg>
        <svg className="ml-[10px]" width="14" height="14" viewBox="0 0 14 14" fill="none" stroke="#111"><path d="M1 11C1 5 6 1 12 1M4 12c0-5 4-8 8-8M7 13c0-3 2-6 5-6M9.500 13c0-1 1-3 3-3" /></svg>
        <svg className="ml-[7px]" width="17" height="14" viewBox="0 0 17 14" fill="none" stroke="#111"><path d="M1 5h3l3-3.500v11L4 9H1zM9.500 4.500c1.500 1 1.500 4 0 5M11.500 3c3 2 3 6 0 8M13.500 1.500c4 3 4 8 0 11" /></svg>
        <span className="ml-[10px] w-[24px]">ENG</span>
        <div className="ml-2.5 w-[60px] text-center text-[11px] leading-[18px] whitespace-nowrap"><div>0:18</div><div>12.11.2019</div></div>
        <div className="relative ml-[15px] h-10 w-10">
          <svg className="mt-3" width="16" height="17" viewBox="0 0 16 17"><path d="M0 0h16v13h-8l-3 3v-3H0z" /><path d="M3 3.500h10M3 6.500h10M3 9.500h7" stroke="#d3dfee" /></svg>
          <span className="absolute top-[19px] left-2 flex h-4 w-4 items-center justify-center rounded-full border border-[#777] bg-[#dcdcdc] text-[12px]">1</span>
        </div>
      </div>
    </footer>
  );
}

export default function App() {
  return (
    <div className="relative flex h-screen flex-col overflow-hidden bg-white font-['Open_Sans',sans-serif] text-[12px]">
      <header className="flex h-[26px] shrink-0 items-center border-b border-[#696969] bg-[#e3e3e3] pl-[3px] text-[#484848]">
        <Kompas size={20} />
        <nav className="ml-[9px] flex gap-[13px] text-[11px]">
          {menus.map((m) => <button key={m} className="pt-0.5">{m}</button>)}
        </nav>
        <div className="ml-auto flex items-center gap-[10px]">
          <svg width="16" height="12" viewBox="0 0 16 12" fill="none" stroke="#333"><path d="M.5.500h15v11H.5zM0 3.500h16" /></svg>
          <svg width="16" height="12" viewBox="0 0 16 12" fill="none" stroke="#333"><path d="M.5.500h15v11H.5zM0 3.500h16M4.500 3v8M8 2h4" /></svg>
          <label className="flex h-[21px] w-[200px] items-center border border-[#a8a8a8] bg-white pl-1.5">
            <svg width="13" height="13" viewBox="0 0 13 13" fill="none" stroke="#999" strokeWidth="1.200"><circle cx="8" cy="5" r="4" /><path d="M5 8l-4 4" /></svg>
            <input placeholder="Поиск по командам (Alt+/)" className="ml-1.5 w-0 flex-1 outline-none placeholder:text-[#a0a0a0]" />
          </label>
        </div>
        <div className="ml-[15px] flex items-center gap-[18px] pr-3 text-[#333]">
          <button aria-label="Свернуть"><svg width="12" height="12" viewBox="0 0 12 12"><path d="M0 8.500h12" stroke="currentColor" strokeWidth="2" /></svg></button>
          <button aria-label="Восстановить"><svg width="14" height="12" viewBox="0 0 14 12" fill="none" stroke="currentColor"><path d="M.5 4.500h10v6H.5zM0 5.500h11M3.500 4V1.500h10v6H11M3 2h11" /></svg></button>
          <button aria-label="Закрыть"><svg width="10" height="10" viewBox="0 0 10 10"><path d="M1 1l8 8M9 1L1 9" stroke="currentColor" strokeWidth="2.200" /></svg></button>
        </div>
      </header>
      <div className="flex h-[25px] shrink-0 border-b-5 border-[#696969] bg-[#b0b0b0] text-[11px] text-[#333]">
        <button className="flex w-5 items-center justify-center" aria-label="Новый документ"><svg width="12" height="12" viewBox="0 0 12 12"><path d="M6 0v12M0 6h12" stroke="currentColor" strokeWidth="1.200" /></svg></button>
        <div className="flex w-[169px] items-center bg-[#696969] pt-0.5 text-white">
          <Icon name="draft" /><span className="flex-1 whitespace-nowrap">Чертеж БЕЗ ИМЕНИ1</span>
          <button className="mr-[7px]" aria-label="Закрыть вкладку"><svg width="8" height="8" viewBox="0 0 8 8"><path d="M1 1l6 6M7 1L1 7" stroke="currentColor" strokeWidth="1.500" /></svg></button>
        </div>
        <button className="flex w-[169px] items-center gap-1 border-r border-[#696969] pt-0.5 pl-1.5">
          <svg width="16" height="15" viewBox="0 0 16 15"><path d="M1 3l3-2h9l2 3v8l-2 2H2l-1-2z" fill="none" stroke="#333" strokeWidth="1.500" /><circle cx="8" cy="7.500" r="4.500" fill="#333" /><circle cx="7.500" cy="7" r="2" fill="#b0b0b0" /></svg>
          Деталь БЕЗ ИМЕНИ1
        </button>
      </div>
      <Ribbon />
      <main className="flex min-h-0 flex-1">
        <SidePanel />
        <div className="flex min-w-0 flex-1 flex-col bg-white"><ViewToolbar /><Sheet /></div>
      </main>
      <Taskbar />
      <Marks />
    </div>
  );
}
